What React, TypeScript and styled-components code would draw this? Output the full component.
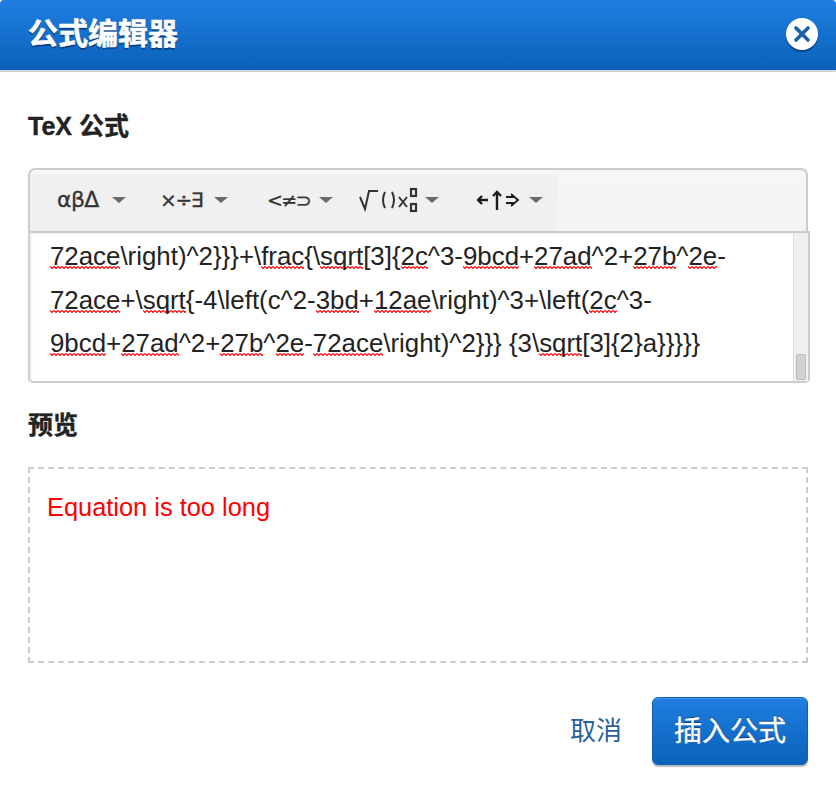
import React from 'react';
import styled, { createGlobalStyle } from 'styled-components';

const CJK = '"Liberation Sans", "Noto Sans CJK SC", sans-serif';

const squiggle =
  "url(\"data:image/svg+xml,%3Csvg xmlns='http://www.w3.org/2000/svg' width='4' height='3'%3E%3Cpath d='M0 .5 L2 2.5 L4 .5' fill='none' stroke='%23f00' stroke-width='1.1'/%3E%3C/svg%3E\")";

const GlobalStyle = createGlobalStyle`
  html, body {
    margin: 0;
    padding: 0;
    background: #fff;
    font-family: ${CJK};
  }
`;

const Dialog = styled.div`
  width: 836px;
  height: 791px;
  overflow: hidden;
  display: flex;
  flex-direction: column;
`;

const Header = styled.header`
  height: 70px;
  flex: none;
  box-sizing: border-box;
  display: flex;
  align-items: center;
  justify-content: space-between;
  padding: 0 18px 2px 28px;
  background: linear-gradient(#1f7ee0, #0a62ba);
  border-radius: 4px 4px 0 0;
  box-shadow: 0 2px 1px #d0d0d0;
`;

const Title = styled.h1`
  margin: 0;
  font-size: 30px;
  line-height: 40px;
  font-weight: 700;
  color: #fff;
  -webkit-text-stroke: 0.5px #fff;
  text-shadow: 0 2px 1px rgba(0, 40, 90, 0.7);
`;

const CloseButton = styled.div`
  width: 32px;
  height: 32px;
  border-radius: 50%;
  background: #fff;
  box-shadow: 0 2px 1px rgba(0, 30, 70, 0.5);
  display: flex;
  align-items: center;
  justify-content: center;
`;

const Body = styled.main`
  flex: 1;
  padding: 0 28px;
  display: flex;
  flex-direction: column;
`;

const Label = styled.h2<{ $top: number }>`
  margin: ${(p) => p.$top}px 0 0;
  font-size: 25px;
  line-height: 34px;
  font-weight: 700;
  color: #222;
  -webkit-text-stroke: 0.4px #222;
`;

const EditorBox = styled.div`
  margin-top: 25px;
  width: 780px;
  display: flex;
  flex-direction: column;
`;

const Toolbar = styled.div`
  height: 63px;
  box-sizing: border-box;
  background: linear-gradient(#f6f6f6, #f3f3f3);
  border: 2px solid #ccc;
  border-bottom: none;
  border-radius: 7px 7px 0 0;
  display: flex;
  align-items: flex-start;
  padding-top: 4px;
`;

const ToolGroup = styled.div`
  width: 527px;
  height: 57px;
  box-sizing: border-box;
  padding-bottom: 6px;
  background: #f0f0f0;
  display: flex;
  align-items: center;
`;

const ToolButton = styled.div<{ $left: number }>`
  display: flex;
  align-items: center;
  margin-left: ${(p) => p.$left}px;
  font-family: "DejaVu Sans", "Liberation Sans", sans-serif;
  line-height: 26px;
  color: #333;
`;

const Glyphs = styled.span<{ $width: number; $spacing: number; $size: number }>`
  display: flex;
  align-items: center;
  width: ${(p) => p.$width}px;
  font-size: ${(p) => p.$size}px;
  letter-spacing: ${(p) => p.$spacing}px;
  white-space: nowrap;
  -webkit-text-stroke: 0.3px #333;
`;

const Caret = styled.span<{ $gap: number }>`
  display: block;
  margin-left: ${(p) => p.$gap}px;
  width: 0;
  height: 0;
  border-style: solid;
  border-width: 6px 7px 0;
  border-color: #6a6a6a transparent transparent;
`;

const Editor = styled.div`
  width: 782px;
  height: 152px;
  box-sizing: border-box;
  border: 2px solid #ccc;
  border-radius: 0 0 5px 5px;
  display: flex;
  background: #fff;
  box-shadow: inset 2px 2px 2px rgba(0, 0, 0, 0.05);
`;

const Lines = styled.div`
  flex: 1;
  padding: 2px 0 0 20px;
  font-size: 25.85px;
  line-height: 43.5px;
  color: #222;
  white-space: nowrap;
  overflow: hidden;
`;

const Line = styled.div``;

const Misspelt = styled.span`
  background-image: ${squiggle};
  background-repeat: repeat-x;
  background-size: 4px 3px;
  background-position: 0 calc(100% - 1px);
`;

const ScrollTrack = styled.div`
  width: 14px;
  flex: none;
  background: #f0f0f0;
  border-left: 1px solid #ddd;
  display: flex;
  flex-direction: column;
  justify-content: flex-end;
  align-items: center;
  padding-bottom: 1px;
`;

const ScrollThumb = styled.div`
  width: 10px;
  height: 26px;
  background: #d2d2d2;
  border: 1px solid #bbb;
  border-radius: 2px;
  box-sizing: border-box;
`;

const Preview = styled.div`
  margin-top: 25px;
  width: 780px;
  height: 196px;
  box-sizing: border-box;
  border: 2px dashed #ccc;
  padding: 21px 17px;
  font-size: 25.4px;
  line-height: 34px;
  color: #f00;
`;

const Footer = styled.footer`
  margin-top: 34px;
  width: 780px;
  display: flex;
  justify-content: flex-end;
  align-items: center;
`;

const Cancel = styled.span`
  font-size: 26px;
  line-height: 34px;
  color: #2a5f9e;
  margin-right: 30px;
`;

const PrimaryButton = styled.div`
  width: 156px;
  height: 68px;
  box-sizing: border-box;
  padding-bottom: 4px;
  display: flex;
  align-items: center;
  justify-content: center;
  border: 1px solid #0b62b5;
  border-radius: 6px;
  background: linear-gradient(#1f7ee0, #0a62ba);
  box-shadow: 0 2px 1px #bbb, inset 0 1px 0 rgba(255, 255, 255, 0.2);
  font-size: 28px;
  color: #fff;
  -webkit-text-stroke: 0.4px #fff;
  text-shadow: 0 -1px 1px rgba(0, 40, 90, 0.8);
`;

const tools = [
  { left: 27, width: 43, gap: 12, size: 22, spacing: -0.6, glyphs: <>αβΔ</> },
  { left: 34, width: 45, gap: 9, size: 20, spacing: -1.2, glyphs: <>×÷∃</> },
  { left: 39, width: 41, gap: 11, size: 19, spacing: -1.6, glyphs: <>&lt;≠⊃</> },
  {
    left: 26,
    width: 60,
    gap: 6,
    size: 20,
    spacing: 0,
    glyphs: (
      <svg width="60" height="26" viewBox="0 0 60 26" fill="none" stroke="#333" strokeWidth="2">
        <path d="M1 10 L6 22 L10 4 H19" />
        <path d="M26 5 Q22 13 26 21 M33 5 Q37 13 33 21" />
        <path d="M40 10 L48 20 M48 10 L40 20" />
        <rect x="52" y="2" width="5" height="7" strokeWidth="2.2" />
        <rect x="52" y="17" width="5" height="7" strokeWidth="2.2" />
      </svg>
    ),
  },
  {
    left: 37,
    width: 44,
    gap: 9,
    size: 20,
    spacing: 0,
    glyphs: (
      <svg width="44" height="24" viewBox="0 0 44 24" fill="none" stroke="#1c1c1c" strokeWidth="2.4">
        <path d="M12 12 H2 M6 8 L2 12 L6 16" />
        <path d="M21 22 V4 M17 8 L21 4 L25 8" />
        <path d="M30 9 H38 M30 15 H38 M35 6 L42 12 L35 18" strokeWidth="1.8" />
      </svg>
    ),
  },
];

const App: React.FC = () => {
  return (
    <Dialog>
      <GlobalStyle />
      <Header>
        <Title>公式编辑器</Title>
        <CloseButton>
          <svg width="20" height="20" viewBox="0 0 20 20" stroke="#1a5fa8" strokeWidth="3.6" strokeLinecap="round">
            <path d="M4 4 L16 16 M16 4 L4 16" />
          </svg>
        </CloseButton>
      </Header>
      <Body>
        <Label $top={39}>TeX 公式</Label>
        <EditorBox>
          <Toolbar>
            <ToolGroup>
              {tools.map((t, i) => (
                <ToolButton key={i} $left={t.left}>
                  <Glyphs $width={t.width} $spacing={t.spacing} $size={t.size}>
                    {t.glyphs}
                  </Glyphs>
                  <Caret $gap={t.gap} />
                </ToolButton>
              ))}
            </ToolGroup>
          </Toolbar>
          <Editor>
            <Lines>
              <Line>
                <Misspelt>72ace</Misspelt>\right)^2{'}}}'}+\<Misspelt>frac</Misspelt>{'{'}\<Misspelt>sqrt</Misspelt>[3]{'{'}
                <Misspelt>2c</Misspelt>^3-<Misspelt>9bcd</Misspelt>+<Misspelt>27ad</Misspelt>^2+<Misspelt>27b</Misspelt>^
                <Misspelt>2e</Misspelt>-
              </Line>
              <Line>
                <Misspelt>72ace</Misspelt>+\<Misspelt>sqrt</Misspelt>{'{'}-4\left(c^2-<Misspelt>3bd</Misspelt>+
                <Misspelt>12ae</Misspelt>\right)^3+\left(<Misspelt>2c</Misspelt>^3-
              </Line>
              <Line>
                <Misspelt>9bcd</Misspelt>+<Misspelt>27ad</Misspelt>^2+<Misspelt>27b</Misspelt>^<Misspelt>2e</Misspelt>-
                <Misspelt>72ace</Misspelt>\right)^2{'}}}'} {'{'}3\<Misspelt>sqrt</Misspelt>[3]{'{'}2{'}'}a{'}}}}}'}
              </Line>
            </Lines>
            <ScrollTrack>
              <ScrollThumb />
            </ScrollTrack>
          </Editor>
        </EditorBox>
        <Label $top={25}>预览</Label>
        <Preview>Equation is too long</Preview>
        <Footer>
          <Cancel>取消</Cancel>
          <PrimaryButton>插入公式</PrimaryButton>
        </Footer>
      </Body>
    </Dialog>
  );
};

export default App;
